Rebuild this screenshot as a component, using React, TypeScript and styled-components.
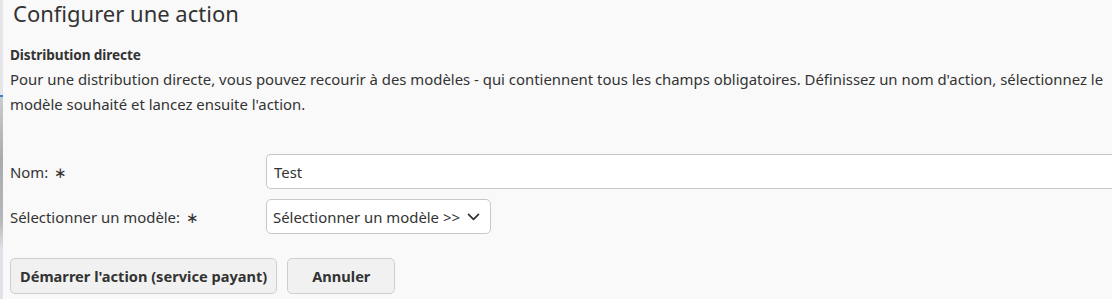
import React from "react";
import styled, { createGlobalStyle } from "styled-components";

const GlobalStyle = createGlobalStyle`
  html, body {
    margin: 0;
    padding: 0;
    background: #f9f9f9;
    font-family: "Noto Sans", "Open Sans", sans-serif;
    color: #333;
  }
`;

const Page = styled.div`
  display: flex;
  width: 1112px;
  height: 299px;
  overflow: hidden;
`;

const BackdropStrip = styled.div`
  flex: 0 0 3px;
  background: linear-gradient(
    to bottom,
    #e4e6ea 0px,
    #e4e6ea 95px,
    #3d7fd0 95px,
    #3d7fd0 97px,
    #c9cccf 97px,
    #a8acae 160px,
    #b5b8ba 220px,
    #dfe2e6 250px,
    #dfe2e6 299px
  );
`;

const Dialog = styled.div`
  flex: 1;
  min-width: 0;
  background: #f9f9f9;
  padding: 0 0 0 7px;
`;

const Title = styled.h2`
  margin: 0;
  padding: 1px 0 0 3px;
  font-size: 22px;
  font-weight: 400;
  line-height: 24px;
  color: #333;
`;

const Intro = styled.div`
  margin-top: 20px;
`;

const IntroHeading = styled.div`
  font-size: 13.6px;
  font-weight: 700;
  line-height: 20px;
  letter-spacing: -0.1px;
`;

const IntroText = styled.p`
  margin: 2px 0 0;
  font-size: 14.9px;
  line-height: 25px;
  white-space: nowrap;
`;

const Form = styled.div`
  margin-top: 37px;
  display: flex;
  flex-direction: column;
  gap: 10px;
`;

const Row = styled.div`
  display: flex;
  align-items: center;
`;

const Label = styled.label`
  flex: 0 0 256px;
  font-size: 14.9px;
`;

const Required = styled.span`
  margin-left: 6px;
`;

const TextInput = styled.input`
  flex: 1;
  min-width: 0;
  height: 35px;
  box-sizing: border-box;
  border: 1px solid #c8c8c8;
  border-right: none;
  border-radius: 5px 0 0 5px;
  background: #fff;
  padding: 0 7px;
  font: inherit;
  font-size: 14.9px;
  color: #333;
  outline: none;
`;

const SelectBox = styled.div`
  display: flex;
  align-items: center;
  gap: 6px;
  height: 35px;
  box-sizing: border-box;
  border: 1px solid #c8c8c8;
  border-radius: 5px;
  background: #fff;
  padding: 0 9px 0 6px;
  font-size: 14.9px;
`;

const Actions = styled.div`
  display: flex;
  gap: 10px;
  margin-top: 24px;
`;

const Button = styled.button<{ $wide?: boolean }>`
  height: 36px;
  box-sizing: border-box;
  border: 1px solid #cfcfcf;
  border-radius: 5px;
  background: #f1f1f1;
  padding: 0 ${({ $wide }) => ($wide ? "9px" : "24px")};
  font: inherit;
  font-size: 14.6px;
  font-weight: 700;
  color: #333;
`;

export default function App(): JSX.Element {
  return (
    <>
      <GlobalStyle />
      <Page>
        <BackdropStrip />
        <Dialog>
          <Title>Configurer une action</Title>
          <Intro>
            <IntroHeading>Distribution directe</IntroHeading>
            <IntroText>
              Pour une distribution directe, vous pouvez recourir à des modèles
              - qui contiennent tous les champs obligatoires. Définissez un nom
              d'action, sélectionnez le
              <br />
              modèle souhaité et lancez ensuite l'action.
            </IntroText>
          </Intro>
          <Form>
            <Row>
              <Label>
                Nom:<Required>∗</Required>
              </Label>
              <TextInput defaultValue="Test" />
            </Row>
            <Row>
              <Label>
                Sélectionner un modèle:<Required>∗</Required>
              </Label>
              <SelectBox>
                Sélectionner un modèle &gt;&gt;
                <svg width="15" height="15" viewBox="0 0 24 24" fill="none" stroke="#333" strokeWidth="2.8" strokeLinecap="round" strokeLinejoin="round">
                  <path d="M4 8.5l8 8 8-8" />
                </svg>
              </SelectBox>
            </Row>
          </Form>
          <Actions>
            <Button $wide>Démarrer l'action (service payant)</Button>
            <Button>Annuler</Button>
          </Actions>
        </Dialog>
      </Page>
    </>
  );
}
